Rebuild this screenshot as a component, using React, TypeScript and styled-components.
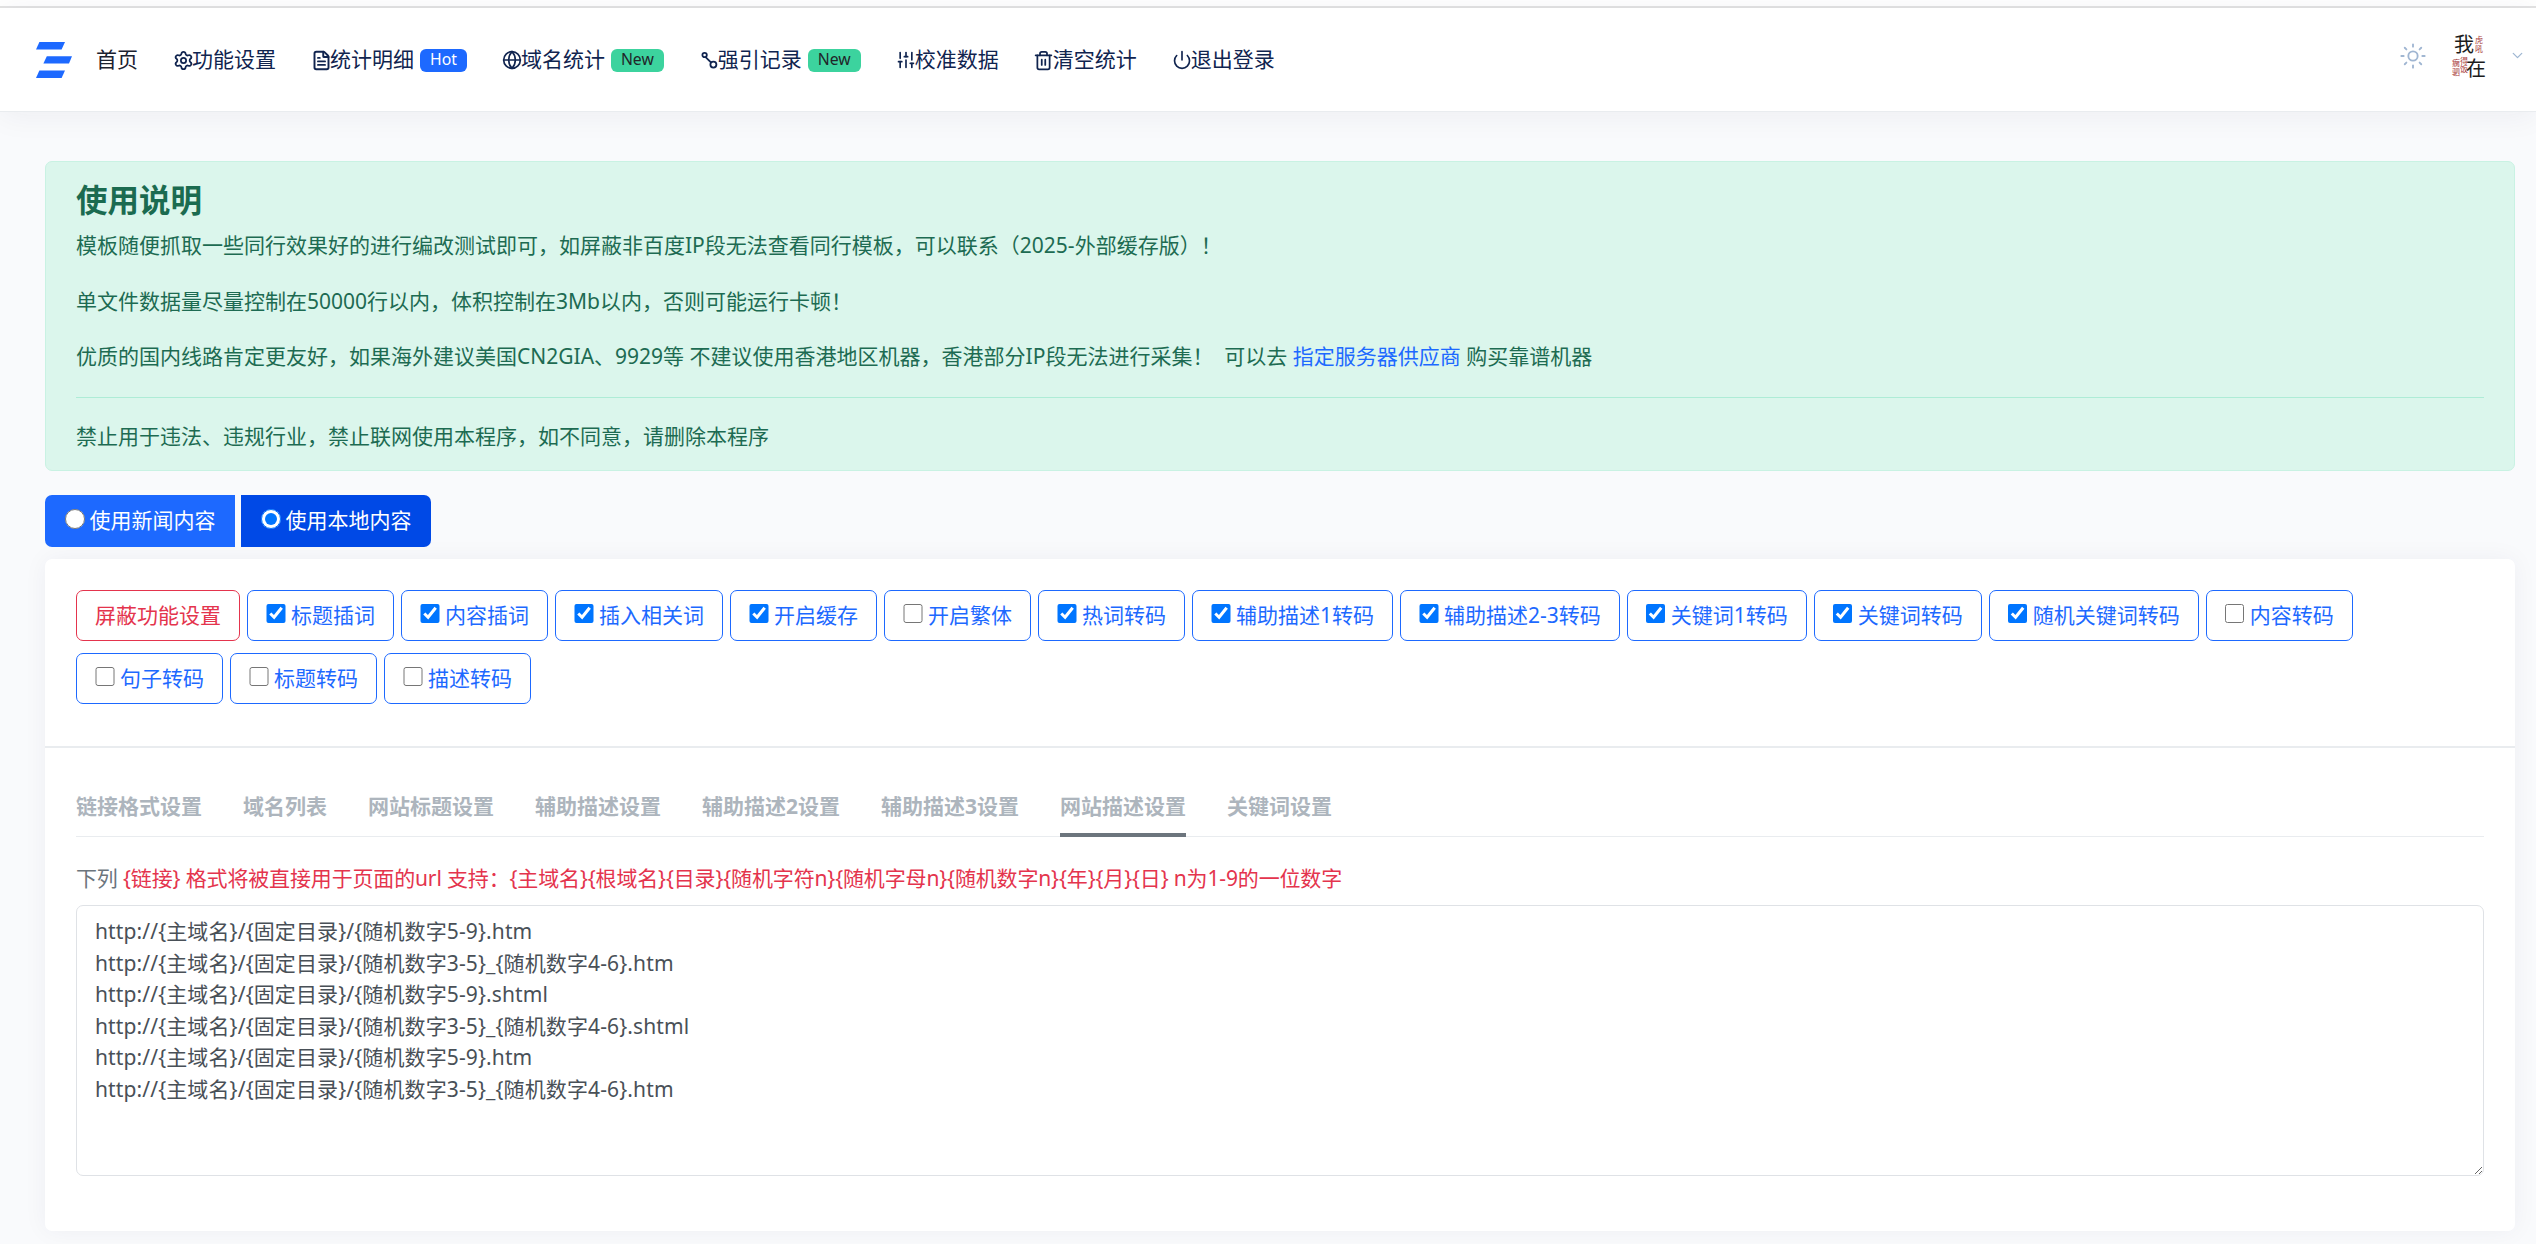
import React, { ReactElement, ReactNode } from 'react'
import styled, { createGlobalStyle } from 'styled-components'
import { Sun, ChevronDown, SlidersVertical, Power, Trash2, Globe, Settings, FileText } from 'lucide-react'

const GlobalStyle = createGlobalStyle`
  html, body {
    margin: 0;
    padding: 0;
  }
  body {
    background: #f9fafc;
    font-family: "Noto Sans", "Noto Sans CJK SC", sans-serif;
    font-size: 21px;
    line-height: 31.5px;
    color: #495057;
  }
  * {
    box-sizing: border-box;
  }
`

const NAV_ITEMS = [
  { label: '功能设置', icon: <Settings size={21} strokeWidth={2} /> },
  { label: '统计明细', icon: <FileText size={21} strokeWidth={2.2} />, badge: 'Hot' },
  { label: '域名统计', icon: <Globe size={20} strokeWidth={2} />, badge: 'New' },
  { label: '强引记录', icon: <BranchIcon />, badge: 'New' },
  { label: '校准数据', icon: <SlidersVertical size={20} strokeWidth={2} /> },
  { label: '清空统计', icon: <Trash2 size={21} strokeWidth={2} /> },
  { label: '退出登录', icon: <Power size={20} strokeWidth={2} /> },
]

const CHIPS = [
  { label: '标题插词', checked: true },
  { label: '内容插词', checked: true },
  { label: '插入相关词', checked: true },
  { label: '开启缓存', checked: true },
  { label: '开启繁体', checked: false },
  { label: '热词转码', checked: true },
  { label: '辅助描述1转码', checked: true },
  { label: '辅助描述2-3转码', checked: true },
  { label: '关键词1转码', checked: true },
  { label: '关键词转码', checked: true },
  { label: '随机关键词转码', checked: true },
  { label: '内容转码', checked: false },
  { label: '句子转码', checked: false },
  { label: '标题转码', checked: false },
  { label: '描述转码', checked: false },
]

const TABS = ['链接格式设置', '域名列表', '网站标题设置', '辅助描述设置', '辅助描述2设置', '辅助描述3设置', '网站描述设置', '关键词设置']

const URL_RULES = `http://{主域名}/{固定目录}/{随机数字5-9}.htm
http://{主域名}/{固定目录}/{随机数字3-5}_{随机数字4-6}.htm
http://{主域名}/{固定目录}/{随机数字5-9}.shtml
http://{主域名}/{固定目录}/{随机数字3-5}_{随机数字4-6}.shtml
http://{主域名}/{固定目录}/{随机数字5-9}.htm
http://{主域名}/{固定目录}/{随机数字3-5}_{随机数字4-6}.htm`

function BranchIcon(): ReactElement {
  return (
    <svg width="18" height="18" viewBox="0 0 18 18" fill="none" stroke="currentColor" strokeWidth="1.8">
      <circle cx="4.6" cy="4" r="2.2" />
      <circle cx="13.4" cy="13.6" r="3" />
      <path d="M5.6 6.1 L11.2 11.6" />
    </svg>
  )
}

function LogoMark(): ReactElement {
  return (
    <svg width="36" height="36" viewBox="0 0 36 36" fill="#1d69ff">
      <polygon points="3.4,0 29,0 25.6,7.4 0,7.4" />
      <polygon points="10.8,14.3 36,14.3 33,21.4 7.4,21.4" />
      <polygon points="3.4,28.6 29,28.6 25.6,36 0,36" />
    </svg>
  )
}

function AvatarPicture(): ReactElement {
  return (
    <svg width="38" height="48" viewBox="-1 -2 38 48" fontFamily="'Noto Sans CJK SC', sans-serif">
      <g fill="#a83c3c" fontSize="8">
        <text x="23" y="9">虎</text>
        <text x="23" y="18">吼</text>
        <text x="8" y="30">得</text>
        <text x="0" y="32">瘸</text>
        <text x="8" y="38">饭</text>
        <text x="0" y="41">驷</text>
      </g>
      <g fill="#1c1c1c" fontSize="20">
        <text x="2" y="18">我</text>
        <text x="14" y="42">在</text>
      </g>
    </svg>
  )
}

function Chip({ label, checked }: { label: string; checked: boolean }): ReactElement {
  return (
    <ChipLabel>
      <ChipBox type="checkbox" defaultChecked={checked} />
      {label}
    </ChipLabel>
  )
}

function Note({ children }: { children: ReactNode }): ReactElement {
  return <AlertText>{children}</AlertText>
}

export default function App(): ReactElement {
  return (
    <>
      <GlobalStyle />
      <TopStrip />
      <Navbar>
        <LogoSlot><LogoMark /></LogoSlot>
        <NavList>
          <NavItem $plain>首页</NavItem>
          {NAV_ITEMS.map((item) => (
            <NavItem key={item.label}>
              <NavIcon>{item.icon}</NavIcon>
              {item.label}
              {item.badge && <Badge $tone={item.badge === 'Hot' ? 'blue' : 'green'}>{item.badge}</Badge>}
            </NavItem>
          ))}
        </NavList>
        <NavRight>
          <Sun size={28} color="#a0b6d2" strokeWidth={1.6} />
          <AvatarSlot><AvatarPicture /></AvatarSlot>
          <ChevronDown size={17} color="#9fb7d3" strokeWidth={1.8} />
        </NavRight>
      </Navbar>
      <Main>
        <Alert>
          <AlertTitle>使用说明</AlertTitle>
          <Note>模板随便抓取一些同行效果好的进行编改测试即可，如屏蔽非百度IP段无法查看同行模板，可以联系（2025-外部缓存版）！</Note>
          <Note>单文件数据量尽量控制在50000行以内，体积控制在3Mb以内，否则可能运行卡顿！</Note>
          <Note>
            优质的国内线路肯定更友好，如果海外建议美国CN2GIA、9929等 不建议使用香港地区机器，香港部分IP段无法进行采集！&nbsp; 可以去 <AlertLink>指定服务器供应商</AlertLink> 购买靠谱机器
          </Note>
          <AlertRule />
          <AlertFoot>禁止用于违法、违规行业，禁止联网使用本程序，如不同意，请删除本程序</AlertFoot>
        </Alert>

        <SourceGroup>
          <SourceButton $first>
            <SourceRadio type="radio" name="source" />
            使用新闻内容
          </SourceButton>
          <SourceButton $active>
            <SourceRadio type="radio" name="source" defaultChecked />
            使用本地内容
          </SourceButton>
        </SourceGroup>

        <CardStack>
          <SwitchCard>
            <ChipRow>
              <DangerChip>屏蔽功能设置</DangerChip>
              {CHIPS.map((chip) => (
                <Chip key={chip.label} label={chip.label} checked={chip.checked} />
              ))}
            </ChipRow>
          </SwitchCard>

          <EditorCard>
            <TabBar>
              {TABS.map((tab) => (
                <Tab key={tab} $active={tab === '网站描述设置'}>{tab}</Tab>
              ))}
            </TabBar>
            <Hint>
              下列 <HintRed>{'{链接} 格式将被直接用于页面的url 支持：{主域名}{根域名}{目录}{随机字符n}{随机字母n}{随机数字n}{年}{月}{日} n为1-9的一位数字'}</HintRed>
            </Hint>
            <RuleArea defaultValue={URL_RULES} spellCheck={false} />
          </EditorCard>
        </CardStack>
      </Main>
    </>
  )
}

const TopStrip = styled.div`
  height: 8px;
  background: #fff;
  border-bottom: 2px solid #e3e3e3;
`

const Navbar = styled.header`
  display: flex;
  align-items: center;
  height: 104px;
  padding: 0 10px 0 36px;
  background: #fff;
  border-bottom: 1px solid #e9ecef;
  box-shadow: 0 3px 30px rgba(30, 42, 70, 0.06);
  position: relative;
`

const LogoSlot = styled.div`
  display: flex;
  width: 36px;
  margin-right: 24px;
`

const NavList = styled.nav`
  display: flex;
  align-items: center;
  gap: 36px;
  margin-top: 1px;
`

const NavItem = styled.a<{ $plain?: boolean }>`
  display: flex;
  align-items: center;
  color: ${(p) => (p.$plain ? '#1b2230' : '#10244f')};
  white-space: nowrap;
`

const NavIcon = styled.span`
  display: flex;
  align-items: center;
  justify-content: center;
  width: 18px;
  height: 18px;

  svg {
    flex-shrink: 0;
  }
`

const Badge = styled.span<{ $tone: 'blue' | 'green' }>`
  display: inline-flex;
  align-items: center;
  justify-content: center;
  height: 23px;
  margin-left: 6px;
  padding: 0 10px;
  border-radius: 6px;
  font-size: 15.75px;
  line-height: 1;
  background: ${(p) => (p.$tone === 'blue' ? '#1d69ff' : '#3cd39e')};
  color: ${(p) => (p.$tone === 'blue' ? '#fff' : '#212529')};
`

const NavRight = styled.div`
  display: flex;
  align-items: center;
  margin-left: auto;
  padding-bottom: 8px;
`

const AvatarSlot = styled.div`
  display: flex;
  margin: 0 20px 0 24px;
`

const Main = styled.main`
  padding: 49px 21px 13px 45px;
`

const Alert = styled.section`
  padding: 19px 30px 18px;
  height: 310px;
  background: #dbf6ec;
  border: 1px solid #c9f2e3;
  border-radius: 7px;
  color: #1d6b52;
`

const AlertTitle = styled.h4`
  margin: 0 0 11px;
  font-size: 31.5px;
  font-weight: 700;
  line-height: 38px;
  color: #1b6b50;
`

const AlertText = styled.p`
  margin: 0 0 24px;
`

const AlertFoot = styled.p`
  margin: 0;
`

const AlertLink = styled.a`
  color: #1d69ff;
`

const AlertRule = styled.hr`
  height: 1px;
  margin: 0 0 23px;
  border: 0;
  background: #aeecd6;
`

const SourceGroup = styled.div`
  display: flex;
  gap: 6px;
  margin: 24px 0 12px;
`

const SourceButton = styled.label<{ $first?: boolean; $active?: boolean }>`
  display: inline-flex;
  align-items: center;
  height: 52px;
  padding: 0 19.5px 0 20px;
  color: #fff;
  background: ${(p) => (p.$active ? '#0049e6' : '#1d69ff')};
  border-radius: ${(p) => (p.$first ? '7px 0 0 7px' : '0 7px 7px 0')};
`

const SourceRadio = styled.input`
  width: 19.5px;
  height: 19.5px;
  margin: -4px 5px 0 0;
`

const CardStack = styled.div`
  background: #fff;
  border-radius: 7px;
  box-shadow: 0 0 24px rgba(30, 42, 70, 0.05);
`

const SwitchCard = styled.section`
  padding: 31px 31px 30px;
  border-bottom: 2px solid #e9ecef;
`

const ChipRow = styled.div`
  display: flex;
  flex-wrap: wrap;
  gap: 12px 7px;
  padding-bottom: 12px;
`

const ChipLabel = styled.label`
  display: inline-flex;
  align-items: center;
  height: 51px;
  padding: 0 18px;
  color: #1d69ff;
  border: 1px solid #1d69ff;
  border-radius: 7px;
  white-space: nowrap;
`

const DangerChip = styled(ChipLabel)`
  color: #e4344d;
  border-color: #e4344d;
`

const ChipBox = styled.input`
  width: 19.5px;
  height: 19.5px;
  margin: -4px 5.5px 0 0;
`

const EditorCard = styled.section`
  padding: 31px 31px 55px;
`

const TabBar = styled.div`
  display: flex;
  gap: 41px;
  border-bottom: 1px solid #e9ecef;
`

const Tab = styled.a<{ $active?: boolean }>`
  padding: 12px 0 10.5px;
  margin-bottom: -1px;
  font-weight: 700;
  color: #adb5bd;
  border-bottom: 4px solid ${(p) => (p.$active ? '#6c757d' : 'transparent')};
`

const Hint = styled.p`
  margin: 26px 0 10.5px;
  color: #6c757d;
  letter-spacing: -0.15px;
`

const HintRed = styled.span`
  color: #e4344d;
`

const RuleArea = styled.textarea`
  display: block;
  width: 100%;
  height: 271px;
  padding: 10px 18px;
  font: inherit;
  letter-spacing: 0.12px;
  color: #495057;
  background: #fff;
  border: 1px solid #dfe2e6;
  border-radius: 7px;
  outline: none;
  resize: vertical;
`
